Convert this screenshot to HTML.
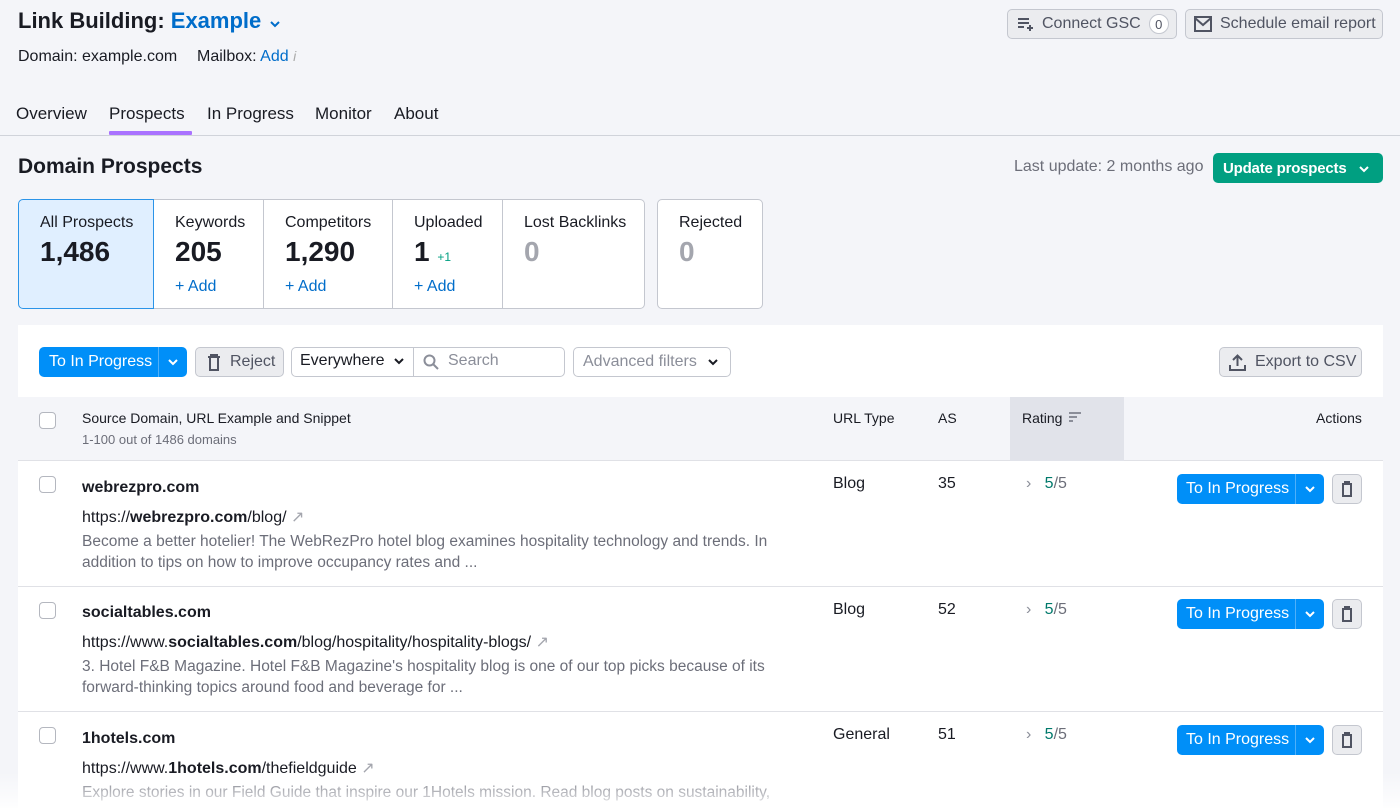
<!DOCTYPE html>
<html style="width:1400px;height:808px;overflow:hidden"><head><meta charset="utf-8"><style>
*{box-sizing:border-box;margin:0;padding:0}
body{width:1400px;height:808px;overflow:hidden;background:#f4f5f9;font-family:"Liberation Sans",sans-serif;color:#191b23;position:relative}
.a{position:absolute;white-space:nowrap}
.btn{position:absolute;border:1px solid #c4c7cf;background:#ebecef;border-radius:5px;color:#505462;font-size:16px;display:flex;align-items:center}
.blue{position:absolute;background:#008ff8;border-radius:5px;color:#fff;font-size:16px;display:flex;align-items:center}
.card{position:absolute;top:199px;height:110px;background:#fff;border:1px solid #c4c7cf}
.card .l{position:absolute;left:21px;top:14px;font-size:16px;color:#191b23}
.card .n{position:absolute;left:21px;top:36px;font-size:28px;font-weight:bold}
.card .ad{position:absolute;left:21px;top:78px;font-size:16px;color:#006dca}
.cb{position:absolute;width:17px;height:17px;border:1px solid #b4b7bf;border-radius:4px;background:#fff}
.dom{font-size:16px;font-weight:bold}
.url{font-size:16px;color:#191b23}
.snip{font-size:15.5px;color:#6c6e79;line-height:21px;white-space:normal;width:700px}
</style></head><body>
<div class="a" style="left:18px;top:8px;font-size:22px;font-weight:600;color:#191b23">Link Building: <span style="color:#006dca">Example</span> <svg width="12" height="8" viewBox="0 0 12 8" style="margin-left:2px"><path d="M2 2l4 4 4-4" stroke="#006dca" stroke-width="2" fill="none"/></svg></div>
<div class="a" style="left:18px;top:48px;font-size:16px">Domain: example.com</div>
<div class="a" style="left:197px;top:48px;font-size:16px">Mailbox: <span style="color:#006dca">Add</span> <span style="color:#aaa;font-style:italic;font-size:14px">i</span></div>

<div class="btn" style="left:1007px;top:9px;width:170px;height:30px;padding-left:9px"><svg width="18" height="16" viewBox="0 0 18 16"><path d="M1 3h11M1 7h11M1 11h6M13 9v6M10 12h6" stroke="#505462" stroke-width="2" fill="none"/></svg><span style="margin-left:7px">Connect GSC</span><span style="margin-left:8px;background:#fff;border:1px solid #c4c7cf;border-radius:10px;width:20px;height:20px;font-size:13px;display:flex;align-items:center;justify-content:center">0</span></div>
<div class="btn" style="left:1185px;top:9px;width:198px;height:30px;padding-left:8px"><svg width="18" height="16" viewBox="0 0 18 16"><rect x="1" y="1" width="16" height="14" fill="none" stroke="#505462" stroke-width="2"/><path d="M1 2l8 7 8-7" stroke="#505462" stroke-width="2" fill="none"/></svg><span style="margin-left:8px">Schedule email report</span></div>

<div class="a" style="left:16px;top:104px;font-size:17px">Overview</div>
<div class="a" style="left:109px;top:104px;font-size:17px">Prospects</div>
<div class="a" style="left:207px;top:104px;font-size:17px">In Progress</div>
<div class="a" style="left:315px;top:104px;font-size:17px">Monitor</div>
<div class="a" style="left:394px;top:104px;font-size:17px">About</div>
<div class="a" style="left:109px;top:131px;width:83px;height:4px;background:#a972ff;border-radius:1px"></div>
<div class="a" style="left:0;top:135px;width:1400px;height:1px;background:#d0d3da"></div>

<div class="a" style="left:18px;top:155px;font-size:21px;font-weight:bold">Domain Prospects</div>
<div class="a" style="left:1014px;top:158px;font-size:16px;color:#6c6e79">Last update: 2 months ago</div>
<div class="a" style="left:1213px;top:153px;width:170px;height:30px;background:#009f81;border-radius:5px;color:#fff;font-size:15px;font-weight:bold;letter-spacing:-0.2px;padding:7px 0 0 10px">Update prospects <svg width="12" height="8" viewBox="0 0 12 8" style="margin-left:8px"><path d="M2 2l4 4 4-4" stroke="#fff" stroke-width="2" fill="none"/></svg></div>

<div class="card" style="left:18px;width:136px;background:#e0efff;border-color:#2b94e8;border-radius:5px 0 0 5px;z-index:2"><div class="l">All Prospects</div><div class="n">1,486</div></div>
<div class="card" style="left:153px;width:111px"><div class="l">Keywords</div><div class="n">205</div><div class="ad">+ Add</div></div>
<div class="card" style="left:263px;width:130px"><div class="l">Competitors</div><div class="n">1,290</div><div class="ad">+ Add</div></div>
<div class="card" style="left:392px;width:111px"><div class="l">Uploaded</div><div class="n">1 <span style="font-size:12px;color:#009f81;font-weight:normal">+1</span></div><div class="ad">+ Add</div></div>
<div class="card" style="left:502px;width:143px;border-radius:0 5px 5px 0"><div class="l">Lost Backlinks</div><div class="n" style="color:#a4a6ae">0</div></div>
<div class="card" style="left:657px;width:106px;border-radius:5px"><div class="l">Rejected</div><div class="n" style="color:#a4a6ae">0</div></div>

<div class="a" style="left:18px;top:325px;width:1365px;height:483px;background:#fff"></div>
<div class="blue" style="left:39px;top:347px;width:148px;height:30px"><span style="padding-left:10px;width:119px">To In Progress</span><span style="border-left:1px solid #4fb0fa;height:30px;width:29px;display:flex;align-items:center;justify-content:center"><svg width="12" height="8" viewBox="0 0 12 8"><path d="M2 2l4 4 4-4" stroke="#fff" stroke-width="2" fill="none"/></svg></span></div>
<div class="btn" style="left:195px;top:347px;width:89px;height:30px;padding-left:11px"><svg width="14" height="17" viewBox="0 0 14 17"><path d="M1 3h12M4 3V1h6v2M3 4v12h8V4" stroke="#505462" stroke-width="2" fill="none"/></svg><span style="margin-left:9px">Reject</span></div>
<div class="a" style="left:291px;top:347px;width:274px;height:30px;border:1px solid #c4c7cf;border-radius:5px;background:#fff"></div>
<div class="a" style="left:413px;top:347px;width:1px;height:30px;background:#c4c7cf"></div>
<div class="a" style="left:300px;top:352px;font-size:16px">Everywhere <svg width="12" height="8" viewBox="0 0 12 8" style="margin-left:4px"><path d="M2 2l4 4 4-4" stroke="#191b23" stroke-width="2" fill="none"/></svg></div>
<svg class="a" style="left:423px;top:354px" width="16" height="16" viewBox="0 0 16 16"><circle cx="6.5" cy="6.5" r="5" stroke="#8b8e99" stroke-width="2" fill="none"/><path d="M10 10l5 5" stroke="#8b8e99" stroke-width="2"/></svg>
<div class="a" style="left:448px;top:352px;font-size:16px;color:#8b8e99">Search</div>
<div class="a" style="left:573px;top:347px;width:158px;height:30px;border:1px solid #c4c7cf;border-radius:5px;background:#fff;font-size:16px;color:#8b8e99;padding:5px 0 0 9px">Advanced filters <svg width="12" height="8" viewBox="0 0 12 8" style="margin-left:6px"><path d="M2 2l4 4 4-4" stroke="#191b23" stroke-width="2" fill="none"/></svg></div>
<div class="btn" style="left:1219px;top:347px;width:143px;height:30px;padding-left:9px"><svg width="17" height="17" viewBox="0 0 17 17"><path d="M8.5 12V2M4 6l4.5-4.5L13 6M1 11v5h15v-5" stroke="#505462" stroke-width="2" fill="none"/></svg><span style="margin-left:9px">Export to CSV</span></div>

<div class="a" style="left:18px;top:397px;width:1365px;height:64px;background:#f4f5f9;border-bottom:1px solid #e0e1e6"></div>
<div class="a" style="left:1010px;top:397px;width:114px;height:64px;background:#e1e3ea"></div>
<div class="cb" style="left:39px;top:412px"></div>
<div class="a" style="left:82px;top:410px;font-size:14px">Source Domain, URL Example and Snippet</div>
<div class="a" style="left:82px;top:432px;font-size:13px;color:#6c6e79">1-100 out of 1486 domains</div>
<div class="a" style="left:833px;top:410px;font-size:14px">URL Type</div>
<div class="a" style="left:938px;top:410px;font-size:14px">AS</div>
<div class="a" style="left:1022px;top:410px;font-size:14px">Rating <svg width="14" height="12" viewBox="0 0 14 12" style="margin-left:2px"><path d="M1 2h12M1 6h8M1 10h4" stroke="#8b8e99" stroke-width="2"/></svg></div>
<div class="a" style="left:1316px;top:410px;font-size:14px">Actions</div>

<div class="a" style="left:18px;top:586px;width:1365px;height:1px;background:#e0e1e6"></div>
<div class="a" style="left:18px;top:711px;width:1365px;height:1px;background:#e0e1e6"></div>

<div class="cb" style="left:39px;top:476px"></div>
<div class="a dom" style="left:82px;top:479px">webrezpro.com</div>
<div class="a url" style="left:82px;top:507px">https://<b>webrezpro.com</b>/blog/ <span style="color:#a4a6ae">↗</span></div>
<div class="a snip" style="left:82px;top:531px">Become a better hotelier! The WebRezPro hotel blog examines hospitality technology and trends. In addition to tips on how to improve occupancy rates and ...</div>
<div class="a" style="left:833px;top:475px;font-size:16px">Blog</div>
<div class="a" style="left:938px;top:475px;font-size:16px">35</div>
<div class="a" style="left:1026px;top:475px;font-size:16px"><span style="color:#8b8e99">›</span>&nbsp;&nbsp;&nbsp;<span style="color:#00796b">5</span><span style="color:#6c6e79">/5</span></div>

<div class="cb" style="left:39px;top:602px"></div>
<div class="a dom" style="left:82px;top:604px">socialtables.com</div>
<div class="a url" style="left:82px;top:632px">https://www.<b>socialtables.com</b>/blog/hospitality/hospitality-blogs/ <span style="color:#a4a6ae">↗</span></div>
<div class="a snip" style="left:82px;top:656px">3. Hotel F&amp;B Magazine. Hotel F&amp;B Magazine's hospitality blog is one of our top picks because of its forward-thinking topics around food and beverage for ...</div>
<div class="a" style="left:833px;top:601px;font-size:16px">Blog</div>
<div class="a" style="left:938px;top:601px;font-size:16px">52</div>
<div class="a" style="left:1026px;top:601px;font-size:16px"><span style="color:#8b8e99">›</span>&nbsp;&nbsp;&nbsp;<span style="color:#00796b">5</span><span style="color:#6c6e79">/5</span></div>

<div class="cb" style="left:39px;top:727px"></div>
<div class="a dom" style="left:82px;top:730px">1hotels.com</div>
<div class="a url" style="left:82px;top:758px">https://www.<b>1hotels.com</b>/thefieldguide <span style="color:#a4a6ae">↗</span></div>
<div class="a snip" style="left:82px;top:782px">Explore stories in our Field Guide that inspire our 1Hotels mission. Read blog posts on sustainability,</div>
<div class="a" style="left:833px;top:726px;font-size:16px">General</div>
<div class="a" style="left:938px;top:726px;font-size:16px">51</div>
<div class="a" style="left:1026px;top:726px;font-size:16px"><span style="color:#8b8e99">›</span>&nbsp;&nbsp;&nbsp;<span style="color:#00796b">5</span><span style="color:#6c6e79">/5</span></div>

<div class="blue" style="left:1177px;top:474px;width:147px;height:30px"><span style="padding-left:9px;width:118px">To In Progress</span><span style="border-left:1px solid #4fb0fa;height:30px;width:29px;display:flex;align-items:center;justify-content:center"><svg width="12" height="8" viewBox="0 0 12 8"><path d="M2 2l4 4 4-4" stroke="#fff" stroke-width="2" fill="none"/></svg></span></div>
<div class="btn" style="left:1332px;top:474px;width:30px;height:30px;justify-content:center"><svg width="12" height="16" viewBox="0 0 12 16"><path d="M1 3h10M4 3V1h4v2M2 4v11h8V4" stroke="#505462" stroke-width="2" fill="none"/></svg></div>
<div class="blue" style="left:1177px;top:599px;width:147px;height:30px"><span style="padding-left:9px;width:118px">To In Progress</span><span style="border-left:1px solid #4fb0fa;height:30px;width:29px;display:flex;align-items:center;justify-content:center"><svg width="12" height="8" viewBox="0 0 12 8"><path d="M2 2l4 4 4-4" stroke="#fff" stroke-width="2" fill="none"/></svg></span></div>
<div class="btn" style="left:1332px;top:599px;width:30px;height:30px;justify-content:center"><svg width="12" height="16" viewBox="0 0 12 16"><path d="M1 3h10M4 3V1h4v2M2 4v11h8V4" stroke="#505462" stroke-width="2" fill="none"/></svg></div>
<div class="blue" style="left:1177px;top:725px;width:147px;height:30px"><span style="padding-left:9px;width:118px">To In Progress</span><span style="border-left:1px solid #4fb0fa;height:30px;width:29px;display:flex;align-items:center;justify-content:center"><svg width="12" height="8" viewBox="0 0 12 8"><path d="M2 2l4 4 4-4" stroke="#fff" stroke-width="2" fill="none"/></svg></span></div>
<div class="btn" style="left:1332px;top:725px;width:30px;height:30px;justify-content:center"><svg width="12" height="16" viewBox="0 0 12 16"><path d="M1 3h10M4 3V1h4v2M2 4v11h8V4" stroke="#505462" stroke-width="2" fill="none"/></svg></div>

<div class="a" style="left:0;top:772px;width:1400px;height:36px;background:linear-gradient(rgba(255,255,255,0),rgba(255,255,255,0.9))"></div>
</body></html>
